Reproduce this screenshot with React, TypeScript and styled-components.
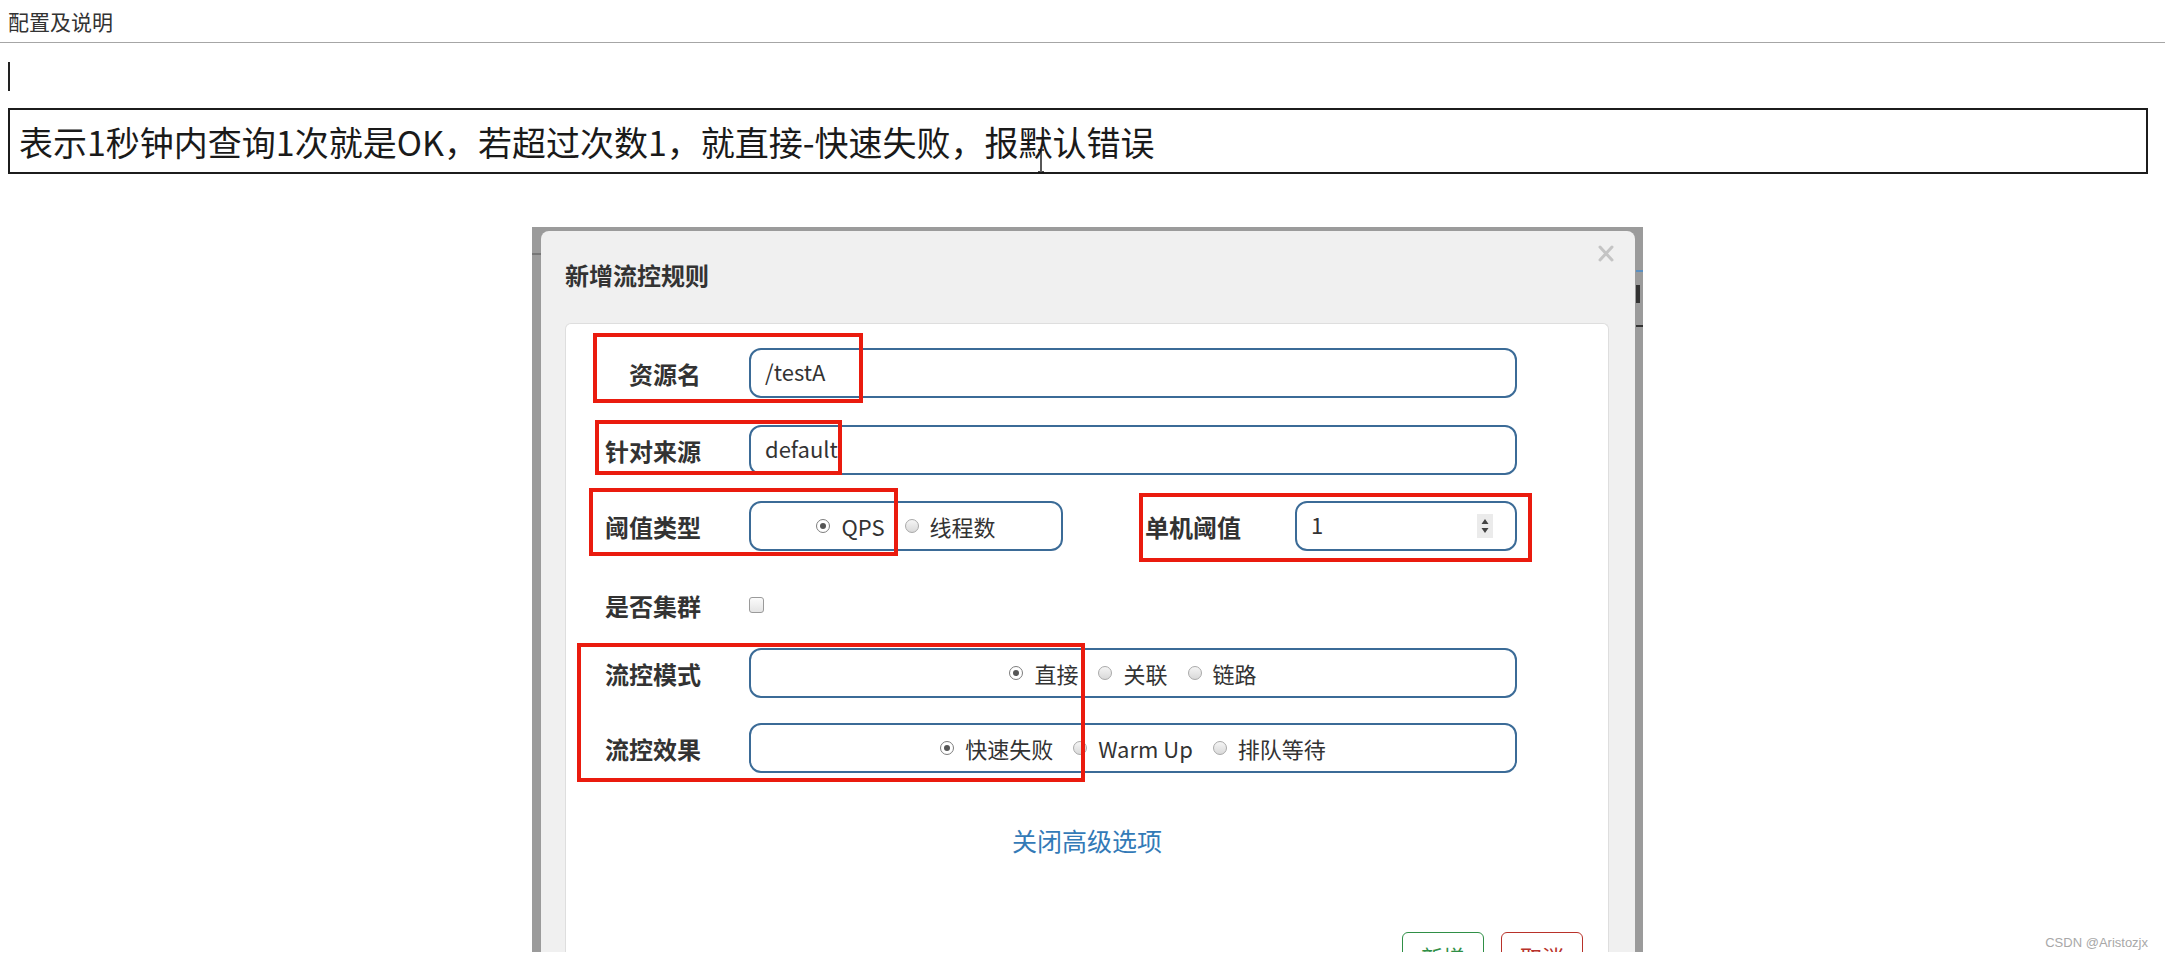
import React from 'react';
import styled, { createGlobalStyle } from 'styled-components';

const GlobalStyle = createGlobalStyle`
  html, body {
    margin: 0;
    padding: 0;
    background: #fff;
  }
  body {
    font-family: "Noto Sans CJK SC", "Noto Sans", sans-serif;
    color: #222;
  }
`;

const Page = styled.div`
  position: relative;
  width: 2165px;
  height: 962px;
  overflow: hidden;
`;

const TopBar = styled.div`
  height: 42px;
  padding-left: 8px;
  display: flex;
  align-items: center;
  font-size: 21px;
  color: #333;
  border-bottom: 1px solid #a6a6a6;
`;

const Caret = styled.div`
  margin: 19px 0 0 8px;
  width: 2px;
  height: 29px;
  background: #222;
`;

const NoteBox = styled.div`
  position: relative;
  margin: 17px 17px 0 8px;
  height: 66px;
  box-sizing: border-box;
  border: 2px solid #1c1c1c;
  display: flex;
  align-items: center;
  padding-left: 9px;
  font-size: 34px;
  color: #1a1a1a;
  white-space: nowrap;
`;

const IBeam = styled.svg`
  position: absolute;
  left: 1027px;
  top: 39px;
`;

const Frame = styled.div`
  position: relative;
  margin: 53px 0 0 532px;
  width: 1111px;
  height: 725px;
  box-sizing: border-box;
  padding: 4px 8px 0 9px;
  background: #9b9b9b;
  overflow: hidden;
  display: flex;
`;

const BackdropMark = styled.span<{ $left: number; $top: number; $w: number; $h: number; $c: string }>`
  position: absolute;
  left: ${(p) => p.$left}px;
  top: ${(p) => p.$top}px;
  width: ${(p) => p.$w}px;
  height: ${(p) => p.$h}px;
  background: ${(p) => p.$c};
`;

const ModalBody = styled.div`
  position: relative;
  flex: 1;
  min-height: 0;
  display: flex;
  flex-direction: column;
  background: #f0f0f0;
  border-radius: 8px 8px 0 0;
  padding: 0 26px 0 24px;
`;

const ModalHeader = styled.div`
  flex-shrink: 0;
  height: 92px;
  box-sizing: border-box;
  padding-bottom: 6px;
  display: flex;
  align-items: center;
  font-size: 24px;
  font-weight: 600;
  color: #333;
`;

const CloseIcon = styled.svg`
  position: absolute;
  top: 14px;
  right: 21px;
`;

const Panel = styled.div`
  position: relative;
  flex: 1 0 auto;
  display: flex;
  flex-direction: column;
  background: #fff;
  border: 1px solid #dedede;
  border-bottom: none;
  border-radius: 6px 6px 0 0;
  padding-top: 24px;
`;

const FormRow = styled.div<{ $mt?: number; $h?: number }>`
  flex-shrink: 0;
  display: flex;
  align-items: center;
  height: ${(p) => p.$h ?? 50}px;
  margin-top: ${(p) => p.$mt ?? 0}px;
`;

const Label = styled.div<{ $inline?: boolean }>`
  flex-shrink: 0;
  width: ${(p) => (p.$inline ? 100 : 135)}px;
  margin-left: ${(p) => (p.$inline ? 82 : 0)}px;
  margin-right: ${(p) => (p.$inline ? 50 : 48)}px;
  text-align: ${(p) => (p.$inline ? 'left' : 'right')};
  font-size: 24px;
  font-weight: 600;
  color: #333;
  white-space: nowrap;
`;

const Field = styled.div<{ $w: number; $center?: boolean }>`
  position: relative;
  flex-shrink: 0;
  width: ${(p) => p.$w}px;
  height: 50px;
  box-sizing: border-box;
  border: 2px solid #3b6b97;
  border-radius: 12px;
  background: #fff;
  display: flex;
  align-items: center;
  justify-content: ${(p) => (p.$center ? 'center' : 'flex-start')};
  padding-left: ${(p) => (p.$center ? 0 : 14)}px;
  font-size: 22px;
  color: #333;
`;

const FieldText = styled.span`
  margin-top: -4px;
`;

const Spinner = styled.svg`
  position: absolute;
  right: 22px;
  top: 11px;
`;

const RadioItem = styled.span`
  display: inline-flex;
  align-items: center;
  gap: 11px;
  margin: 0 10px;
  font-size: 22px;
  color: #333;
  white-space: nowrap;
`;

const RadioDot = styled.span<{ $on?: boolean }>`
  position: relative;
  width: 14px;
  height: 14px;
  box-sizing: border-box;
  border-radius: 50%;
  border: 1px solid ${(p) => (p.$on ? '#7d7d7d' : '#a9a9a9')};
  background: ${(p) => (p.$on ? '#fff' : 'linear-gradient(#f5f5f5, #d9d9d9)')};

  &::after {
    content: '';
    display: ${(p) => (p.$on ? 'block' : 'none')};
    position: absolute;
    left: 3px;
    top: 3px;
    width: 6px;
    height: 6px;
    border-radius: 50%;
    background: #555;
  }
`;

const CheckBox = styled.span`
  width: 15px;
  height: 16px;
  box-sizing: border-box;
  border: 1px solid #9a9a9a;
  border-radius: 3px;
  background: linear-gradient(#fbfbfb, #e4e4e4);
`;

const ToggleLink = styled.div`
  flex-shrink: 0;
  align-self: center;
  margin-top: 50px;
  height: 34px;
  line-height: 34px;
  font-size: 25px;
  color: #337ab7;
`;

const ButtonRow = styled.div`
  flex-shrink: 0;
  display: flex;
  justify-content: flex-end;
  gap: 17px;
  margin-top: 75px;
  padding-right: 25px;
`;

const ActionButton = styled.div<{ $tone: string }>`
  width: 82px;
  height: 48px;
  box-sizing: border-box;
  border: 1.5px solid ${(p) => p.$tone};
  border-radius: 6px;
  background: #fff;
  color: ${(p) => p.$tone};
  font-size: 22px;
  display: flex;
  align-items: center;
  justify-content: center;
`;

const Mark = styled.div<{ $l: number; $t: number; $w: number; $h: number }>`
  position: absolute;
  left: ${(p) => p.$l}px;
  top: ${(p) => p.$t}px;
  width: ${(p) => p.$w}px;
  height: ${(p) => p.$h}px;
  box-sizing: border-box;
  border: 4px solid #ea1b0e;
  pointer-events: none;
`;

const Watermark = styled.div`
  position: absolute;
  right: 17px;
  bottom: 11px;
  font-family: "Liberation Sans", sans-serif;
  font-size: 13px;
  line-height: 16px;
  color: #a8a8a8;
`;

const Radio = ({ on, children }: { on?: boolean; children: React.ReactNode }) => (
  <RadioItem>
    <RadioDot $on={on} />
    {children}
  </RadioItem>
);

const marks = [
  { l: 27, t: 9, w: 270, h: 70 },
  { l: 29, t: 96, w: 247, h: 55 },
  { l: 23, t: 164, w: 309, h: 68 },
  { l: 573, t: 169, w: 393, h: 69 },
  { l: 11, t: 319, w: 508, h: 139 },
];

const App = () => {
  return (
    <Page>
      <GlobalStyle />
      <TopBar>配置及说明</TopBar>
      <Caret />
      <NoteBox>
        表示1秒钟内查询1次就是OK，若超过次数1，就直接-快速失败，报默认错误
        <IBeam width="8" height="24" viewBox="0 0 8 24">
          <path d="M1 1h2.5M4.5 1H7M4 1.5v21M1 23h2.5M4.5 23H7" stroke="#111" strokeWidth="1.4" fill="none" />
        </IBeam>
      </NoteBox>

      <Frame>
        <BackdropMark $left={0} $top={26} $w={9} $h={2} $c="#777" />
        <BackdropMark $left={1104} $top={43} $w={7} $h={2} $c="#5b8fc0" />
        <BackdropMark $left={1104} $top={58} $w={4} $h={18} $c="#333" />
        <BackdropMark $left={1104} $top={98} $w={7} $h={2} $c="#333" />

        <ModalBody>
          <ModalHeader>新增流控规则</ModalHeader>
          <CloseIcon width="16" height="17" viewBox="0 0 16 17">
            <path d="M2 2l12 13M14 2L2 15" stroke="#c4c4c4" strokeWidth="3" strokeLinecap="round" />
          </CloseIcon>

          <Panel>
            <FormRow>
              <Label>资源名</Label>
              <Field $w={768}>
                <FieldText>/testA</FieldText>
              </Field>
            </FormRow>

            <FormRow $mt={27}>
              <Label>针对来源</Label>
              <Field $w={768}>
                <FieldText>default</FieldText>
              </Field>
            </FormRow>

            <FormRow $mt={26}>
              <Label>阈值类型</Label>
              <Field $w={314} $center>
                <Radio on>QPS</Radio>
                <Radio>线程数</Radio>
              </Field>
              <Label $inline>单机阈值</Label>
              <Field $w={222}>
                <FieldText>1</FieldText>
                <Spinner width="16" height="24" viewBox="0 0 16 24">
                  <rect width="16" height="24" fill="#ebebeb" />
                  <path d="M8 5l3.5 5h-7zM8 19l3.5-5h-7z" fill="#444" />
                </Spinner>
              </Field>
            </FormRow>

            <FormRow $mt={34} $h={40}>
              <Label>是否集群</Label>
              <CheckBox />
            </FormRow>

            <FormRow $mt={23}>
              <Label>流控模式</Label>
              <Field $w={768} $center>
                <Radio on>直接</Radio>
                <Radio>关联</Radio>
                <Radio>链路</Radio>
              </Field>
            </FormRow>

            <FormRow $mt={25}>
              <Label>流控效果</Label>
              <Field $w={768} $center>
                <Radio on>快速失败</Radio>
                <Radio>Warm Up</Radio>
                <Radio>排队等待</Radio>
              </Field>
            </FormRow>

            <ToggleLink>关闭高级选项</ToggleLink>

            <ButtonRow>
              <ActionButton $tone="#2f8f46">新增</ActionButton>
              <ActionButton $tone="#b8322a">取消</ActionButton>
            </ButtonRow>

            {marks.map((m, i) => (
              <Mark key={i} $l={m.l} $t={m.t} $w={m.w} $h={m.h} />
            ))}
          </Panel>
        </ModalBody>
      </Frame>

      <Watermark>CSDN @Aristozjx</Watermark>
    </Page>
  );
};

export default App;
